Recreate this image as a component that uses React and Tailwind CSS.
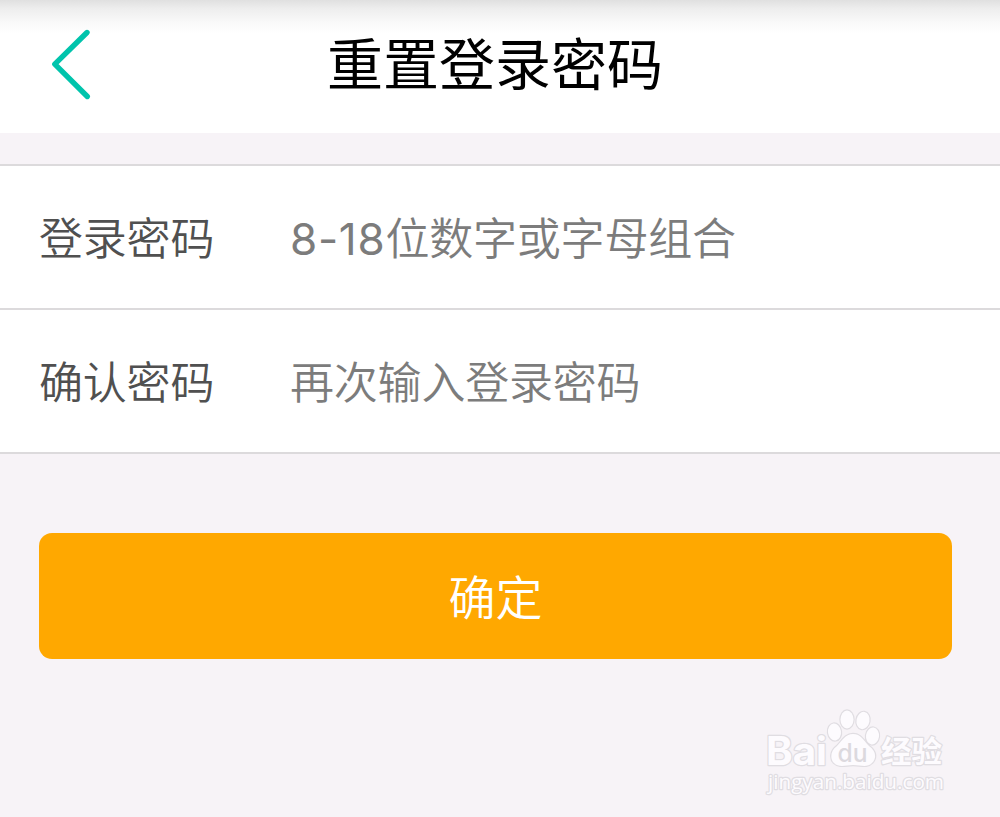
import React from 'react';

const fields = [
  { label: '登录密码', range: '8-18', hint: '位数字或字母组合' },
  { label: '确认密码', range: '', hint: '再次输入登录密码' },
];

const Header = () => (
  <header className="h-[133px] shrink-0 bg-[linear-gradient(to_bottom,#e0e0e0_0px,#eeeeee_9px,#f9f9f9_22px,#ffffff_34px)] flex items-start pl-[50px]">
    <button type="button" aria-label="返回" className="mt-7 w-[42px] h-[73px] shrink-0">
      <svg viewBox="0 0 42 73" className="w-full h-full" fill="none" stroke="#00c4ac" strokeWidth="5.4" strokeLinecap="round" strokeLinejoin="round">
        <path d="M37 4.5 L4.8 36.2 L37.3 68.5" />
      </svg>
    </button>
    <h1 className="ml-[235px] mt-[25px] text-[56px] leading-[80px] text-black whitespace-nowrap">重置登录密码</h1>
  </header>
);

const Field = ({ label, range, hint }) => (
  <label className="h-[144px] flex items-center border-b-2 border-[#dcdadc] pl-[39px] pt-[3px] text-[44px] leading-[64px] font-[350] whitespace-nowrap">
    <span className="w-[251px] text-[#505050] tracking-[-0.2px]">{label}</span>
    <span className="text-[#7c7c7c] tracking-[-0.2px]">
      {range && <span className="font-[370] tracking-[0.7px]">{range}</span>}
      {hint}
    </span>
  </label>
);

const Watermark = () => (
  <svg
    viewBox="0 0 210 110"
    className="w-[210px] h-[110px] ml-[750px] mt-[41px]"
    fill="#fdfbfe"
    stroke="#e0dde2"
    strokeWidth="2.4"
    strokeLinejoin="round"
    paintOrder="stroke"
  >
    <text x="16" y="65" fontSize="39" fontWeight="700" textLength="61" lengthAdjust="spacingAndGlyphs" className="font-['Inter',sans-serif]">Bai</text>
    <ellipse cx="84.5" cy="32" rx="6.5" ry="8.5" transform="rotate(-8 84.5 32)" />
    <ellipse cx="97" cy="19.5" rx="6.5" ry="9" />
    <ellipse cx="113" cy="20.5" rx="6.5" ry="8.7" transform="rotate(10 113 20.5)" />
    <ellipse cx="122.5" cy="36" rx="6.5" ry="8.5" transform="rotate(8 122.5 36)" />
    <path d="M103 34 C95 34 92 41 87 46 C80 51 80 59 84 63 C89 68 96 65 103 65 C111 65 117 68 122 63 C127 58 126 51 119 46 C113 40 111 34 103 34 Z" />
    <text x="87.5" y="62" fontSize="25" fontWeight="500" textLength="30" lengthAdjust="spacingAndGlyphs" fill="#dcd9de" stroke="none" className="font-['Inter',sans-serif]">du</text>
    <text x="131" y="62" fontSize="30" fontWeight="700" textLength="61" lengthAdjust="spacingAndGlyphs">经验</text>
    <text x="18" y="89" fontSize="20" textLength="176" lengthAdjust="spacingAndGlyphs" className="font-['Open_Sans',sans-serif]">jingyan.baidu.com</text>
  </svg>
);

const App = () => {
  return (
    <div className="w-[1000px] h-[817px] overflow-hidden flex flex-col bg-[#f7f3f7] font-['Inter','Noto_Sans_CJK_SC',sans-serif]">
      <Header />
      <main className="mt-[31px]">
        <form className="bg-white border-t-2 border-[#dcdadc]">
          {fields.map((field) => (
            <Field key={field.label} {...field} />
          ))}
        </form>
        <button type="button" className="mt-[79px] ml-[39px] block w-[913px] h-[126px] rounded-[13px] bg-[#ffa800] text-white text-[47px] leading-[64px] pt-1 font-[350]">
          确定
        </button>
      </main>
      <Watermark />
    </div>
  );
};

export default App;
